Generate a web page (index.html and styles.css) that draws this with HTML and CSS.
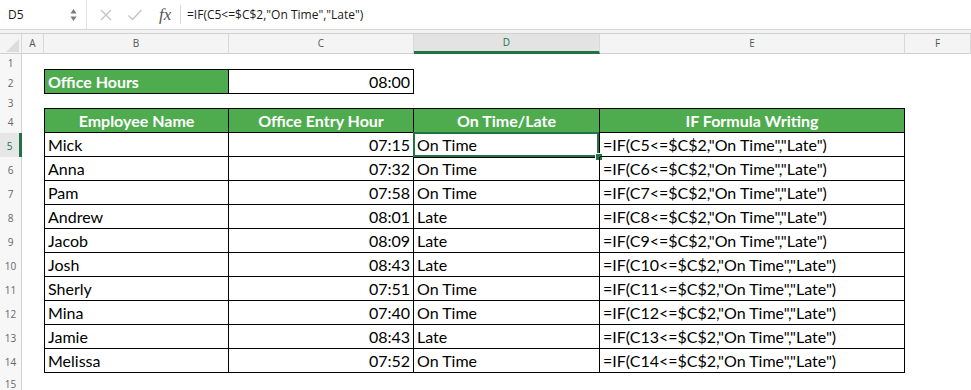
FILE: index.html
```html
<html>
<head>
<title>Office Hours - IF formula</title>
<link rel="stylesheet" href="styles.css">
</head>
<body>
    <div class="formulaBar">
        <div class="nameBox">
            <span>D5</span>
            <svg class="spinner" width="7" height="14" viewBox="0 0 7 14">
                <path d="M3.5 1 L6.5 5.5 L0.5 5.5 Z" fill="#7a7a7a"/>
                <path d="M3.5 13 L6.5 8.5 L0.5 8.5 Z" fill="#7a7a7a"/>
            </svg>
        </div>
        <div class="barIcons">
            <svg width="14" height="14" viewBox="0 0 14 14"><path d="M2 2 L12 12 M12 2 L2 12" stroke="#c4c4c4" stroke-width="1.4"/></svg>
            <svg width="16" height="14" viewBox="0 0 16 14"><path d="M1.5 7.5 L5.5 11.5 L14.5 2" stroke="#c4c4c4" stroke-width="1.4" fill="none"/></svg>
            <span class="fx">fx</span>
        </div>
        <div class="formula">=IF(C5&lt;=$C$2,"On Time","Late")</div>
    </div>

    <div class="sheet">
        <div class="row colHeads">
            <div class="corner"><svg width="13" height="13" viewBox="0 0 13 13"><path d="M13 0 L13 13 L0 13 Z" fill="#dcdcdc"/></svg></div>
            <div class="colHead">A</div>
            <div class="colHead">B</div>
            <div class="colHead">C</div>
            <div class="colHead activo">D</div>
            <div class="colHead">E</div>
            <div class="colHead">F</div>
        </div>

        <div class="row r1"><div class="rowHead">1</div></div>
        <div class="row r2">
            <div class="rowHead">2</div><div></div>
            <div class="cell verde izq top bold">Office Hours</div>
            <div class="cell top num">08:00</div>
        </div>
        <div class="row r3"><div class="rowHead">3</div></div>
        <div class="row r4">
            <div class="rowHead">4</div><div></div>
            <div class="cell verde izq top bold centro">Employee Name</div>
            <div class="cell verde top bold centro">Office Entry Hour</div>
            <div class="cell verde top bold centro">On Time/Late</div>
            <div class="cell verde top bold centro">IF Formula Writing</div>
        </div>

        <div id="filas"></div>

        <div class="row r15"><div class="rowHead">15</div></div>
    </div>

    <script src="script.js"></script>
</body>
</html>
```

FILE: script.js
```js
// datos de la tabla
var empleados = [
    ["Mick", "07:15", "On Time"],
    ["Anna", "07:32", "On Time"],
    ["Pam", "07:58", "On Time"],
    ["Andrew", "08:01", "Late"],
    ["Jacob", "08:09", "Late"],
    ["Josh", "08:43", "Late"],
    ["Sherly", "07:51", "On Time"],
    ["Mina", "07:40", "On Time"],
    ["Jamie", "08:43", "Late"],
    ["Melissa", "07:52", "On Time"]
];

var filas = document.getElementById("filas");
var html = "";
empleados.forEach(function (e, i) {
    var n = i + 5;
    var formula = '=IF(C' + n + '&lt;=$C$2,"On Time","Late")';
    html += '<div class="row fila">' +
        '<div class="rowHead' + (n == 5 ? ' activo' : '') + '">' + n + '</div><div></div>' +
        '<div class="cell izq">' + e[0] + '</div>' +
        '<div class="cell num">' + e[1] + '</div>' +
        '<div class="cell' + (n == 5 ? ' seleccion' : '') + '">' + e[2] + '</div>' +
        '<div class="cell">' + formula + '</div>' +
        '</div>';
});
filas.innerHTML = html;
```

FILE: styles.css
```css
* {
    box-sizing: border-box;
    margin: 0px;
    padding: 0px;
}
body {
    background-color: white;
    font-family: "Lato", "Liberation Sans", sans-serif;
    overflow: hidden;
}
.formulaBar {
    height: 30px;
    display: flex;
    align-items: center;
    border-bottom: 1px solid #d6d6d6;
    font-family: "Open Sans", "Liberation Sans", sans-serif;
    font-size: 12px;
    color: #1a1a1a;
}
.nameBox {
    width: 87px;
    height: 100%;
    display: flex;
    align-items: center;
    justify-content: space-between;
    padding: 0 9px 0 8px;
    border-right: 1px solid #e2e2e2;
}
.spinner {
    margin-top: 1px;
}
.barIcons {
    width: 94px;
    height: 19px;
    display: flex;
    align-items: center;
    padding-left: 12px;
    gap: 14px;
    border-right: 1px solid #d6d6d6;
}
.fx {
    font-family: "Liberation Serif", serif;
    font-style: italic;
    font-size: 17px;
    color: #555;
    margin-left: 2px;
}
.formula {
    padding-left: 6px;
}
.sheet {
    border-top: 3px solid #f2f2f2;
}
.row {
    display: grid;
    grid-template-columns: 22px 22px 185px 185px 186px 305px 1fr;
    height: 24px;
}
.colHeads {
    height: 21px;
    background-color: #f4f4f4;
    border-top: 1px solid #cfcfcf;
    border-bottom: 1px solid #cfcfcf;
}
.corner {
    display: flex;
    align-items: flex-end;
    justify-content: flex-end;
    padding: 0 2px 2px 0;
    border-right: 1px solid #d8d8d8;
}
.colHead {
    font-family: "Open Sans", "Liberation Sans", sans-serif;
    font-size: 10px;
    color: #555;
    text-align: center;
    line-height: 19px;
    border-right: 1px solid #d8d8d8;
}
.colHead.activo {
    background-color: #e3e3e3;
    color: #217346;
    border-bottom: 3px solid #217346;
    line-height: 17px;
}
.rowHead {
    font-family: "Open Sans", "Liberation Sans", sans-serif;
    font-size: 10px;
    color: #666;
    text-align: center;
    background-color: #f7f7f7;
    border-right: 1px solid #d3d3d3;
    display: flex;
    align-items: center;
    justify-content: center;
    padding-top: 2px;
}
.rowHead.activo {
    color: #217346;
    background-color: #e6e6e6;
    border-right: 3px solid #217346;
}
.r1 { height: 15px; }
.r2 { height: 25px; }
.r3 { height: 14px; }
.r4 { height: 25px; }
.r15 { height: 20px; }

.cell {
    font-size: 16px;
    color: black;
    border-right: 1px solid black;
    border-bottom: 1px solid black;
    padding: 0 3px;
    line-height: 23px;
    white-space: nowrap;
    position: relative;
}
.izq { border-left: 1px solid black; }
.top { border-top: 1px solid black; }
.verde {
    background-color: #4eac4f;
    color: white;
}
.bold { font-weight: bold; }
.centro { text-align: center; }
.num { text-align: right; }
.seleccion {
    box-shadow: inset 0 0 0 2px #217346;
    margin: -1px 0 -1px -1px;
    padding-left: 4px;
    line-height: 25px;
}
.seleccion::after {
    content: "";
    position: absolute;
    right: -4px;
    bottom: -4px;
    width: 6px;
    height: 6px;
    background-color: #217346;
    border: 1px solid white;
}
```
